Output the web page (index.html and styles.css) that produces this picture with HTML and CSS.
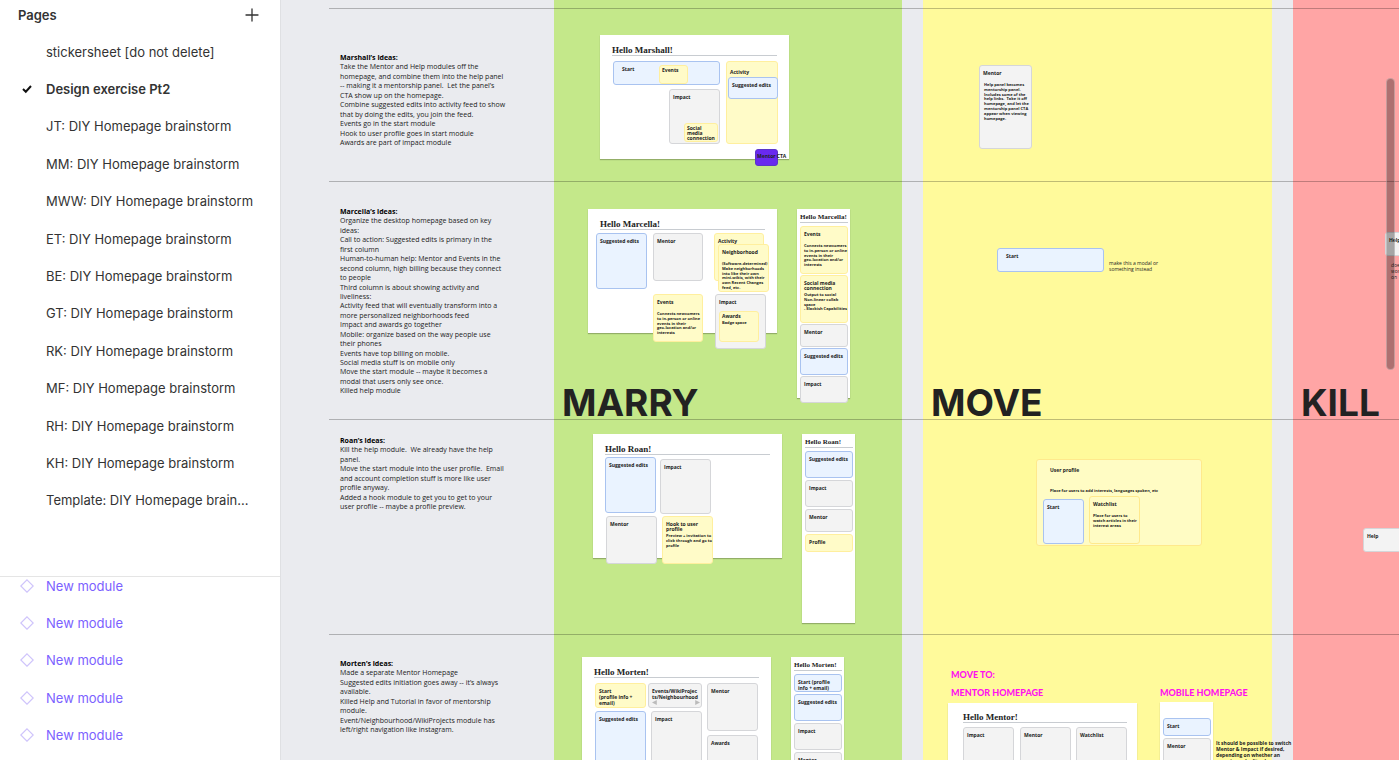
FILE: index.html
```html
<!DOCTYPE html>
<html lang="en">
<head>
<meta charset="utf-8">
<title>Design exercise Pt2</title>
<link rel="stylesheet" href="styles.css">
</head>
<body>
<aside class="sidebar">
  <section class="pages">
    <header class="pages-head">
      <h2>Pages</h2>
      <button class="add" aria-label="Add page"><svg width="14" height="14" viewBox="0 0 14 14"><path d="M7 1v12M1 7h12" stroke="#333" stroke-width="1.3" stroke-linecap="round"/></svg></button>
    </header>
    <ul class="page-list">
      <li><button>stickersheet [do not delete]</button></li>
      <li class="current"><svg class="mark" width="10" height="10" viewBox="0 0 10 10"><path d="M1 5l2.800 2.700L9 2" fill="none" stroke="#111" stroke-width="2"/></svg><button>Design exercise Pt2</button></li>
      <li><button>JT: DIY Homepage brainstorm</button></li>
      <li><button>MM: DIY Homepage brainstorm</button></li>
      <li><button>MWW: DIY Homepage brainstorm</button></li>
      <li><button>ET: DIY Homepage brainstorm</button></li>
      <li><button>BE: DIY Homepage brainstorm</button></li>
      <li><button>GT: DIY Homepage brainstorm</button></li>
      <li><button>RK: DIY Homepage brainstorm</button></li>
      <li><button>MF: DIY Homepage brainstorm</button></li>
      <li><button>RH: DIY Homepage brainstorm</button></li>
      <li><button>KH: DIY Homepage brainstorm</button></li>
      <li><button>Template: DIY Homepage brain...</button></li>
    </ul>
  </section>
  <section class="layers">
    <ul class="layer-list">
      <li><svg class="mark" width="14" height="14" viewBox="0 0 14 14"><path d="M7 .8L13.200 7 7 13.200.8 7z" fill="none" stroke="#cfc4fb" stroke-width="1.200"/></svg><button>New module</button></li>
      <li><svg class="mark" width="14" height="14" viewBox="0 0 14 14"><path d="M7 .8L13.200 7 7 13.200.8 7z" fill="none" stroke="#cfc4fb" stroke-width="1.200"/></svg><button>New module</button></li>
      <li><svg class="mark" width="14" height="14" viewBox="0 0 14 14"><path d="M7 .8L13.200 7 7 13.200.8 7z" fill="none" stroke="#cfc4fb" stroke-width="1.200"/></svg><button>New module</button></li>
      <li><svg class="mark" width="14" height="14" viewBox="0 0 14 14"><path d="M7 .8L13.200 7 7 13.200.8 7z" fill="none" stroke="#cfc4fb" stroke-width="1.200"/></svg><button>New module</button></li>
      <li><svg class="mark" width="14" height="14" viewBox="0 0 14 14"><path d="M7 .8L13.200 7 7 13.200.8 7z" fill="none" stroke="#cfc4fb" stroke-width="1.200"/></svg><button>New module</button></li>
    </ul>
  </section>
</aside>

<main class="canvas">
  <div class="columns">
    <section class="column marry"><h1>MARRY</h1></section>
    <section class="column move"><h1>MOVE</h1></section>
    <section class="column kill"><h1>KILL</h1></section>
  </div>
  <hr class="rule rule-a"><hr class="rule rule-b"><hr class="rule rule-c"><hr class="rule rule-d">

  <article class="note note-marshall"><h3>Marshall’s ideas:</h3><p>Take the Mentor and Help modules off the
homepage, and combine them into the help panel
-- making it a mentorship panel.  Let the panel’s
CTA show up on the homepage.
Combine suggested edits into activity feed to show
that by doing the edits, you join the feed.
Events go in the start module
Hook to user profile goes in start module
Awards are part of impact module</p></article>

  <article class="note note-marcella"><h3>Marcella’s ideas:</h3><p>Organize the desktop homepage based on key
ideas:
Call to action: Suggested edits is primary in the
first column
Human-to-human help: Mentor and Events in the
second column, high billing because they connect
to people
Third column is about showing activity and
liveliness:
Activity feed that will eventually transform into a
more personalized neighborhoods feed
Impact and awards go together
Mobile: organize based on the way people use
their phones
Events have top billing on mobile.
Social media stuff is on mobile only
Move the start module -- maybe it becomes a
modal that users only see once.
Killed help module</p></article>

  <article class="note note-roan"><h3>Roan’s ideas:</h3><p>Kill the help module.  We already have the help
panel.
Move the start module into the user profile.  Email
and account completion stuff is more like user
profile anyway.
Added a hook module to get you to get to your
user profile -- maybe a profile preview.</p></article>

  <article class="note note-morten"><h3>Morten’s ideas:</h3><p>Made a separate Mentor Homepage
Suggested edits initiation goes away -- it’s always
available.
Killed Help and Tutorial in favor of mentorship
module.
Event/Neighbourhood/WikiProjects module has
left/right navigation like instagram.</p></article>

  <section class="desk desk-marshall">
    <h2>Hello Marshall!</h2>
    <div class="card blue ma-start"><h4>Start</h4></div>
    <div class="card yellow snug ma-events"><h4>Events</h4></div>
    <div class="card gray ma-impact"><h4>Impact</h4></div>
    <div class="card yellow snug ma-social"><h4>Social
media
connection</h4></div>
    <div class="card yellow ma-activity"><h4>Activity</h4></div>
    <div class="card blue ma-edits"><h4>Suggested edits</h4></div>
    <div class="card purple ma-cta"><h4>Mentor CTA</h4></div>
  </section>

  <section class="desk desk-marcella">
    <h2>Hello Marcella!</h2>
    <div class="card blue mc-edits"><h4>Suggested edits</h4></div>
    <div class="card gray mc-mentor"><h4>Mentor</h4></div>
    <div class="card yellow mc-activity"><h4>Activity</h4></div>
    <div class="card yellow mc-hood"><h4>Neighborhood</h4><p class="apart">(Software-determined)
Make neighborhoods
into like their own
mini-wikis, with their
own Recent Changes
feed, etc.</p></div>
    <div class="card yellow mc-events"><h4>Events</h4><p class="apart">Connects newcomers
to in-person or online
events in their
geo-location and/or
interests</p></div>
    <div class="card gray mc-impact"><h4>Impact</h4></div>
    <div class="card yellow snug mc-awards"><h4>Awards</h4><p>Badge space</p></div>
  </section>

  <section class="phone phone-marcella">
    <h2>Hello Marcella!</h2>
    <div class="card yellow h-48"><h4>Events</h4><p class="apart">Connects newcomers
to in-person or online
events in their
geo-location and/or
interests</p></div>
    <div class="card yellow h-48"><h4>Social media
connection</h4><p>Output to social
Non-linear collab
space
- Slackish Capabilities</p></div>
    <div class="card gray h-23"><h4>Mentor</h4></div>
    <div class="card blue h-27"><h4>Suggested edits</h4></div>
    <div class="card gray h-27"><h4>Impact</h4></div>
  </section>

  <section class="desk desk-roan">
    <h2>Hello Roan!</h2>
    <div class="card blue ro-edits"><h4>Suggested edits</h4></div>
    <div class="card gray ro-impact"><h4>Impact</h4></div>
    <div class="card gray ro-mentor"><h4>Mentor</h4></div>
    <div class="card yellow ro-hook"><h4>Hook to user
profile</h4><p>Preview + invitation to
click through and go to
profile</p></div>
  </section>

  <section class="phone phone-roan">
    <h2>Hello Roan!</h2>
    <div class="card blue h-27"><h4>Suggested edits</h4></div>
    <div class="card gray h-27"><h4>Impact</h4></div>
    <div class="card gray h-23"><h4>Mentor</h4></div>
    <div class="card yellow h-18"><h4>Profile</h4></div>
  </section>

  <section class="desk desk-morten">
    <h2>Hello Morten!</h2>
    <div class="card yellow loose mo-start"><h4>Start
(profile info +
email)</h4></div>
    <div class="card gray loose mo-events"><h4>Events/WikiProjec
ts/Neighbourhood</h4><svg class="arrows" viewBox="0 0 50 5"><path d="M5 0v5L0 2.500zM45 0v5l5-2.500z" fill="#bbb"/></svg></div>
    <div class="card gray mo-mentor"><h4>Mentor</h4></div>
    <div class="card blue mo-edits"><h4>Suggested edits</h4></div>
    <div class="card gray mo-impact"><h4>Impact</h4></div>
    <div class="card gray mo-awards"><h4>Awards</h4></div>
  </section>

  <section class="phone phone-morten">
    <h2>Hello Morten!</h2>
    <div class="card blue loose h-18"><h4>Start (profile
info + email)</h4></div>
    <div class="card blue h-27"><h4>Suggested edits</h4></div>
    <div class="card gray h-27"><h4>Impact</h4></div>
    <div class="card gray h-27"><h4>Mentor</h4></div>
  </section>

  <div class="card gray mv-mentor"><h4>Mentor</h4><p class="apart">Help panel becomes
mentorship panel.
Includes some of the
help links.  Take it off
homepage, and let the
mentorship panel CTA
appear when viewing
homepage.</p></div>
  <div class="card blue mv-start"><h4>Start</h4></div>
  <p class="remark mv-remark">make this a modal or
something instead</p>

  <section class="card pale mv-profile">
    <h4>User profile</h4>
    <p>Place for users to add interests, languages spoken, etc</p>
    <div class="card blue pr-start"><h4>Start</h4></div>
    <div class="card pale pr-watch"><h4>Watchlist</h4><p class="apart">Place for users to
watch articles in their
interest areas</p></div>
  </section>

  <h3 class="pink pink-mentor">MOVE TO:
MENTOR HOMEPAGE</h3>
  <h3 class="pink pink-mobile">MOBILE HOMEPAGE</h3>

  <section class="desk desk-mentor">
    <h2>Hello Mentor!</h2>
    <div class="card gray me-impact"><h4>Impact</h4></div>
    <div class="card gray me-mentor"><h4>Mentor</h4></div>
    <div class="card gray me-watch"><h4>Watchlist</h4></div>
  </section>
  <section class="phone phone-mobile">
    <div class="card blue h-18"><h4>Start</h4></div>
    <div class="card gray h-27"><h4>Mentor</h4></div>
  </section>
  <p class="remark strong mobile-remark">It should be possible to switch
Mentor &amp; Impact if desired,
depending on whether an
experienced editor has</p>

  <div class="card gray kl-help"><h4>Help</h4></div>
  <p class="remark kl-remark">does
work
on</p>
  <div class="card gray kl-help-roan"><h4>Help</h4></div>

  <div class="scrollbar"></div>
</main>
</body>
</html>
```

FILE: styles.css
```css
* { box-sizing: border-box; }
h1, h2, h3, h4, p, ul { margin: 0; padding: 0; }
ul { list-style: none; }

body {
  margin: 0;
  display: flex;
  height: 100vh;
  overflow: hidden;
  font-family: Inter, "Liberation Sans", sans-serif;
}

/* Sidebar */
.sidebar {
  flex: 0 0 281px;
  display: flex;
  flex-direction: column;
  background: #fff;
  border-right: 1px solid #dfe0e3;
  color: #333;
}
.sidebar button {
  padding: 0;
  border: 0;
  background: none;
  font: inherit;
  color: inherit;
  white-space: nowrap;
}
.pages { padding-bottom: 57px; border-bottom: 1px solid #e5e5e5; }
.pages-head {
  display: flex;
  align-items: center;
  justify-content: space-between;
  height: 33px;
  padding: 0 21px 4px 18px;
}
.pages-head h2 { font-size: 13px; font-weight: 600; }
.add { display: flex; }
.page-list, .layer-list { display: grid; grid-auto-rows: 1fr; }
.page-list { height: 486px; }
.layer-list { height: 187px; margin-top: -10px; color: #7b61ff; }
.layers { flex: 1; overflow: hidden; }
.sidebar li {
  position: relative;
  display: flex;
  align-items: center;
  padding-left: 46px;
  font-size: 13px;
}
.sidebar .current { font-weight: 600; }
.mark { position: absolute; left: 20px; }
.current .mark { left: 22px; }

/* Canvas */
.canvas {
  position: relative;
  flex: 1;
  overflow: hidden;
  background: #eaebef;
  border-right: 1px solid #fff;
  font-family: "Open Sans", "Noto Sans", sans-serif;
  color: #222;
}
.columns {
  display: grid;
  grid-template-columns: 348px 349px 1fr;
  column-gap: 21px;
  height: 100%;
  padding-left: 273px;
}
.column { padding: 380px 0 0 8px; }
.column h1 {
  font-family: Inter, sans-serif;
  font-size: 37px;
  line-height: 46px;
  font-weight: 700;
}
.marry { background: #c4e88a; }
.move { background: #fffa9b; }
.kill { background: #ffa5a5; }

.rule {
  position: absolute;
  left: 48px;
  right: 0;
  height: 1px;
  margin: 0;
  border: 0;
  background: rgba(0, 0, 0, .25);
}
.rule-a { top: 8px; }
.rule-b { top: 181px; }
.rule-c { top: 419px; }
.rule-d { top: 634px; }

.note {
  position: absolute;
  left: 59px;
  font-size: 7px;
  line-height: 1.35;
  white-space: pre;
}
.note h3 { font-size: 7px; color: #000; }
.note-marshall { top: 53px; }
.note-marcella { top: 207px; }
.note-roan { top: 436px; }
.note-morten { top: 659px; }

/* Mock-up frames */
.desk, .phone {
  position: absolute;
  background: #fff;
  box-shadow: 0 1px 1px rgba(0, 0, 0, .25);
}
.desk { width: 189px; height: 124px; padding: 10px 12px; }
.phone { width: 53px; height: 189px; padding: 3px 2px 0 3px; display: flex; flex-direction: column; gap: 2px; }
.desk h2, .phone h2 {
  font-family: "Liberation Serif", serif;
  font-weight: 700;
  white-space: nowrap;
  border-bottom: 1px solid #c8ccd1;
}
.desk h2 { font-size: 9px; line-height: 10px; }
.phone h2 { font-size: 7px; line-height: 10px; margin-bottom: 1px; }

.desk-marshall { left: 319px; top: 35px; }
.desk-marcella { left: 307px; top: 209px; }
.desk-roan { left: 312px; top: 434px; }
.desk-morten { left: 301px; top: 657px; }
.desk-mentor { left: 667px; top: 703px; padding: 9px 10px 0 15px; }
.phone-marcella { left: 516px; top: 209px; gap: 1px; }
.phone-marcella h2 { margin-bottom: 2px; }
.phone-roan { left: 521px; top: 434px; }
.phone-morten { left: 510px; top: 657px; }
.phone-mobile { left: 879px; top: 702px; padding-top: 16px; }

/* Module cards */
.card {
  border: 1px solid;
  border-radius: 3px;
  padding: 5px 0 0 3px;
  white-space: pre;
  font-size: 4px;
  line-height: 1.2;
  font-weight: 700;
  flex: none;
}
.canvas > .card, .desk > .card, .card > .card { position: absolute; }
.card h4 { font-size: 5px; line-height: 5px; font-weight: 700; }
.card p { margin-top: 2px; }
.card .apart { margin-top: 7px; }
.snug { padding: 2px 0 0 2px; }
.loose { padding-top: 4px; }
.loose h4 { line-height: 6px; }
.blue { background: #eaf3ff; border-color: #a9c3f0; }
.gray { background: #f3f3f3; border-color: #d5d6d9; }
.yellow { background: #fffbc8; border-color: #ffef9e; }
.pale { background: #fffcc4; border-color: #ffe98c; }
.purple { background: #6929ef; border-color: #5a35c8; }
.h-18 { height: 18px; }
.h-23 { height: 23px; }
.h-27 { height: 27px; }
.h-48 { height: 48px; }

.ma-start { left: 13px; top: 26px; width: 107px; height: 24px; padding-left: 8px; }
.ma-events { left: 59px; top: 30px; width: 29px; height: 19px; }
.ma-impact { left: 69px; top: 54px; width: 51px; height: 55px; }
.ma-social { left: 84px; top: 88px; width: 34px; height: 19px; }
.ma-activity { left: 126px; top: 26px; width: 52px; height: 83px; padding-top: 8px; }
.ma-edits { left: 128px; top: 42px; width: 50px; height: 22px; }
.ma-cta { left: 155px; top: 114px; width: 23px; height: 17px; padding: 4px 0 0 1px; }

.mc-edits { left: 8px; top: 24px; width: 51px; height: 56px; }
.mc-mentor { left: 65px; top: 24px; width: 50px; height: 48px; }
.mc-activity { left: 126px; top: 24px; width: 50px; height: 48px; }
.mc-hood { left: 130px; top: 35px; width: 51px; height: 48px; }
.mc-events { left: 65px; top: 85px; width: 50px; height: 48px; }
.mc-impact { left: 127px; top: 85px; width: 51px; height: 55px; }
.mc-awards { left: 131px; top: 102px; width: 40px; height: 31px; }

.ro-edits { left: 12px; top: 23px; width: 51px; height: 56px; }
.ro-impact { left: 67px; top: 25px; width: 51px; height: 55px; }
.ro-mentor { left: 13px; top: 82px; width: 51px; height: 48px; }
.ro-hook { left: 69px; top: 82px; width: 51px; height: 48px; }

.mo-start { left: 13px; top: 26px; width: 51px; height: 25px; }
.mo-events { left: 66px; top: 26px; width: 54px; height: 25px; }
.mo-mentor { left: 125px; top: 26px; width: 51px; height: 48px; }
.mo-edits { left: 13px; top: 54px; width: 51px; height: 56px; }
.mo-impact { left: 69px; top: 54px; width: 51px; height: 56px; }
.mo-awards { left: 125px; top: 78px; width: 51px; height: 48px; }
.arrows { display: block; width: 48px; height: 5px; }

.me-impact { left: 15px; top: 24px; width: 51px; height: 48px; }
.me-mentor { left: 72px; top: 24px; width: 51px; height: 48px; }
.me-watch { left: 128px; top: 24px; width: 51px; height: 48px; }

.mv-mentor { left: 698px; top: 65px; width: 53px; height: 84px; }
.mv-mentor p { padding-left: 1px; }
.mv-start { left: 716px; top: 248px; width: 107px; height: 24px; padding-left: 8px; }
.mv-profile { left: 755px; top: 459px; width: 166px; height: 87px; padding: 8px 0 0 13px; white-space: normal; }
.mv-profile > p { margin-top: 16px; }
.mv-profile > .card { white-space: pre; }
.pr-start { left: 6px; top: 39px; width: 41px; height: 45px; }
.pr-watch { left: 52px; top: 36px; width: 51px; height: 48px; }
.kl-help { left: 1104px; top: 232px; width: 48px; height: 24px; }
.kl-help-roan { left: 1082px; top: 528px; width: 48px; height: 24px; }

.remark { position: absolute; font-size: 5px; line-height: 6px; white-space: pre; }
.strong { font-weight: 700; }
.mv-remark { left: 828px; top: 260px; }
.mobile-remark { left: 935px; top: 740px; }
.kl-remark { left: 1110px; top: 262px; }

.pink {
  position: absolute;
  font-family: Lato, sans-serif;
  font-size: 9px;
  line-height: 18px;
  font-weight: 900;
  color: #ff12ee;
  white-space: pre;
}
.pink-mentor { left: 670px; top: 666px; }
.pink-mobile { left: 879px; top: 684px; }

.scrollbar {
  position: absolute;
  right: 4px;
  top: 78px;
  width: 9px;
  height: 292px;
  border: 1px solid rgba(255, 255, 255, .3);
  border-radius: 5px;
  background: rgba(0, 0, 0, .32);
}
```
